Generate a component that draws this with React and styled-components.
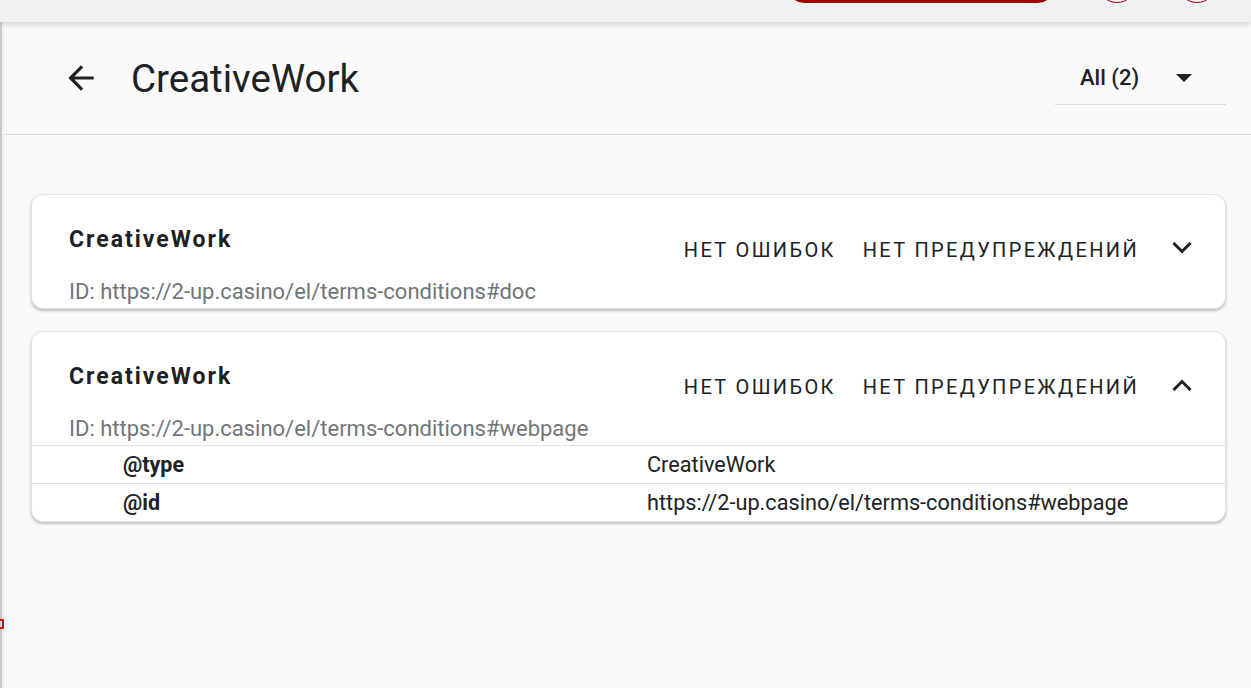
import React from "react";
import styled, { createGlobalStyle } from "styled-components";

const GlobalStyle = createGlobalStyle`
  html, body { margin: 0; padding: 0; background: #fafafa; }
  body { font-family: Roboto, "Noto Sans", Arial, sans-serif; color: #202124; }
  * { box-sizing: border-box; }
`;

const Page = styled.div`
  width: 1251px;
  height: 688px;
  overflow: hidden;
  display: flex;
  flex-direction: column;
  background: #fafafa;
`;

const TopBar = styled.div`
  height: 22px;
  flex: none;
  background: #eff0f2;
  box-shadow: 0 2px 6px rgba(0, 0, 0, 0.18);
  position: relative;
  z-index: 2;
  overflow: hidden;
  display: flex;
  align-items: flex-end;
  padding: 0 0 19px 788px;
`;

const RedPill = styled.div`
  width: 266px;
  height: 40px;
  flex: none;
  border-radius: 16px;
  background: #a50000;
`;

const RingButton = styled.div`
  width: 40px;
  height: 40px;
  flex: none;
  border-radius: 50%;
  border: 1.5px solid #a50000;
  margin-left: ${(p) => p.$gap}px;
`;

const Body = styled.div`
  flex: 1;
  display: flex;
  min-height: 0;
`;

const LeftRail = styled.div`
  width: 4px;
  flex: none;
  border-left: 2px solid #c9c9c9;
  background: #f2f2f2;
  position: relative;
`;

const RailMark = styled.div`
  position: absolute;
  left: -2px;
  top: 597px;
  width: 4px;
  height: 10px;
  border: 2px solid #b71c1c;
  border-left: none;
  background: #d8d8d8;
`;

const Main = styled.div`
  flex: 1;
  display: flex;
  flex-direction: column;
  min-width: 0;
`;

const Header = styled.div`
  height: 113px;
  flex: none;
  display: flex;
  align-items: center;
  padding: 0 25px 0 58px;
  border-bottom: 1px solid #dcdcdc;
`;

const BackButton = styled.button`
  width: 38px;
  height: 38px;
  padding: 0;
  border: none;
  background: none;
  display: flex;
  align-items: center;
  justify-content: center;
  color: #202124;
  margin-right: 31px;
  cursor: pointer;
`;

const PageTitle = styled.h1`
  margin: 0;
  font-family: Roboto, Arial, sans-serif;
  font-size: 38.5px;
  font-weight: 400;
  color: #202124;
  flex: 1;
  line-height: 1;
  padding-top: 2px;
`;

const Select = styled.div`
  width: 171px;
  height: 54px;
  align-self: flex-start;
  margin-top: 29px;
  display: flex;
  align-items: center;
  justify-content: space-between;
  padding: 0 34px 0 25px;
  border-bottom: 1px solid #dcdcdc;
  font-size: 22px;
  font-weight: 500;
  color: #202124;
`;

const Content = styled.div`
  display: flex;
  flex-direction: column;
  gap: 22px;
  padding: 59px 25px 0 27px;
`;

const Card = styled.div`
  background: #fff;
  border: 1px solid #e3e3e3;
  border-radius: 12px;
  box-shadow: 0 2px 3px rgba(0, 0, 0, 0.24);
  overflow: hidden;
`;

const CardHead = styled.div`
  display: flex;
  align-items: flex-start;
  padding: 29px 33px 2px 37px;
`;

const CardIdent = styled.div`
  flex: 1;
  display: flex;
  flex-direction: column;
  gap: 22px;
`;

const CardTitle = styled.div`
  font-size: 23px;
  line-height: 32px;
  font-weight: 700;
  letter-spacing: 2px;
  color: #202124;
`;

const CardId = styled.div`
  font-size: 22px;
  line-height: 28px;
  color: #70757a;
`;

const Status = styled.span`
  font-size: 20px;
  line-height: 28px;
  letter-spacing: 2.35px;
  text-transform: uppercase;
  color: #202124;
  margin-top: 12px;
  margin-left: ${(p) => p.$gap || 0}px;
`;

const Chevron = styled.span`
  width: 20px;
  display: flex;
  margin-left: 33px;
  margin-top: 18px;
  color: #202124;
`;

const Table = styled.div`
  margin-top: 0;
`;

const Row = styled.div`
  display: grid;
  grid-template-columns: 524px 1fr;
  height: 38px;
  align-items: center;
  border-top: 1px solid #e0e0e0;
  padding-left: 91px;
`;

const Key = styled.div`
  font-size: 21.5px;
  font-weight: 700;
  color: #202124;
`;

const Value = styled.div`
  font-size: 21.7px;
  color: #202124;
`;

const ArrowBack = () => (
  <svg width="38" height="38" viewBox="0 0 24 24" fill="currentColor">
    <path d="M20 11H7.83l5.59-5.59L12 4l-8 8 8 8 1.41-1.41L7.83 13H20v-2z" />
  </svg>
);

const DropTriangle = () => (
  <svg width="16" height="8" viewBox="0 0 16 8" fill="#202124">
    <path d="M0 0h16L8 8z" />
  </svg>
);

const ChevronIcon = ({ open }) => (
  <svg width="20" height="12" viewBox="0 0 20 12" fill="none" stroke="currentColor" strokeWidth="3" strokeLinecap="square">
    {open ? <path d="M2.5 10 10 2.5 17.5 10" /> : <path d="M2.5 2 10 9.5 17.5 2" />}
  </svg>
);

const items = [
  {
    id: "https://2-up.casino/el/terms-conditions#doc",
    open: false,
    rows: [],
  },
  {
    id: "https://2-up.casino/el/terms-conditions#webpage",
    open: true,
    rows: [
      ["@type", "CreativeWork"],
      ["@id", "https://2-up.casino/el/terms-conditions#webpage"],
    ],
  },
];

export default function App() {
  return (
    <Page>
      <GlobalStyle />
      <TopBar>
        <RedPill />
        <RingButton $gap={43} />
        <RingButton $gap={40} />
      </TopBar>
      <Body>
        <LeftRail>
          <RailMark />
        </LeftRail>
        <Main>
          <Header>
            <BackButton aria-label="Назад">
              <ArrowBack />
            </BackButton>
            <PageTitle>CreativeWork</PageTitle>
            <Select>
              <span>All (2)</span>
              <DropTriangle />
            </Select>
          </Header>
          <Content>
            {items.map((it) => (
              <Card key={it.id}>
                <CardHead>
                  <CardIdent>
                    <CardTitle>CreativeWork</CardTitle>
                    <CardId>ID: {it.id}</CardId>
                  </CardIdent>
                  <Status>Нет ошибок</Status>
                  <Status $gap={27}>Нет предупреждений</Status>
                  <Chevron>
                    <ChevronIcon open={it.open} />
                  </Chevron>
                </CardHead>
                {it.rows.length > 0 && (
                  <Table>
                    {it.rows.map(([k, v]) => (
                      <Row key={k}>
                        <Key>{k}</Key>
                        <Value>{v}</Value>
                      </Row>
                    ))}
                  </Table>
                )}
              </Card>
            ))}
          </Content>
        </Main>
      </Body>
    </Page>
  );
}
